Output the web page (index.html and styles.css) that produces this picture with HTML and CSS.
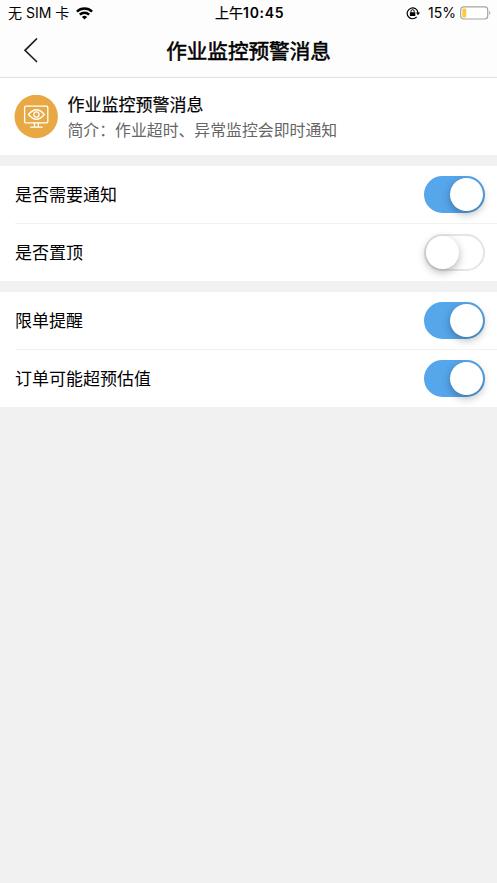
FILE: index.html
```html
<!DOCTYPE html>
<html lang="zh-CN">
<head>
<meta charset="utf-8">
<meta name="viewport" content="width=device-width, initial-scale=1">
<title>作业监控预警消息</title>
<link rel="stylesheet" href="styles.css">
</head>
<body>
<header class="header">
  <div class="status">
    <div class="carrier"><span>无 SIM 卡</span>
      <svg class="wifi" width="17" height="13" viewBox="0 0 17 13"><g fill="none" stroke="#000" stroke-width="2.4"><path d="M.9 4.7a10.8 10.8 0 0 1 15.2 0"/><path d="M3.8 7.7a6.7 6.7 0 0 1 9.4 0"/></g><path d="M5.9 9.9a3.8 3.8 0 0 1 5.2 0L8.500 12.500z"/></svg>
    </div>
    <div class="time">上午<b>10:45</b></div>
    <div class="power">
      <svg class="lock" width="14" height="14" viewBox="0 0 14 14"><path d="M10.700 10.900A5.400 5.400 0 1 1 12 7" fill="none" stroke="#000" stroke-width="1.200"/><path d="M10 6.500h4l-2 2.700z"/><rect x="3.900" y="6.200" width="5.400" height="3.900" rx=".5"/><path d="M5 6.500V5.300a1.600 1.600 0 0 1 3.200 0v1.200" fill="none" stroke="#000"/></svg>
      <span class="percent">15%</span>
      <svg class="battery" width="31" height="14" viewBox="0 0 31 14"><rect x=".7" y=".8" width="27" height="12.200" rx="3" fill="#fff" stroke="#a5a5a5" stroke-width="1.200"/><rect x="2.300" y="2.400" width="3.900" height="9" rx="1" fill="#fbcb3c"/><path d="M29.200 4.800q2.200 2.100 0 4.200z" fill="#a5a5a5"/></svg>
    </div>
  </div>
  <nav class="nav">
    <svg class="back" width="16" height="26" viewBox="0 0 16 26"><path d="M14 .5 2 12.300 14 24" fill="none" stroke="#222" stroke-width="1.700"/></svg>
    <h1 class="title">作业监控预警消息</h1>
  </nav>
</header>
<main>
  <section class="intro">
    <svg class="avatar" width="44" height="44" viewBox="0 0 44 44"><circle cx="22.200" cy="21.500" r="21.700" fill="#e8a843"/><g fill="none" stroke="#fff" stroke-width="1.300" stroke-linecap="round"><rect x="10.600" y="11.100" width="23.200" height="16.700" rx="1.200"/><path d="M14.500 19.500q7.900-9.500 15.800 0-7.900 9.500-15.800 0z"/><circle cx="22.400" cy="19.500" r="2.600"/><path d="M20.500 28v4M24.300 28v4M16.700 32.200H28.200"/></g></svg>
    <div class="intro-text">
      <h2 class="name">作业监控预警消息</h2>
      <p class="summary">简介：作业超时、异常监控会即时通知</p>
    </div>
  </section>
  <section class="group">
    <label class="row"><span>是否需要通知</span><input class="switch" type="checkbox" checked></label>
    <label class="row"><span>是否置顶</span><input class="switch" type="checkbox"></label>
  </section>
  <section class="group">
    <label class="row"><span>限单提醒</span><input class="switch" type="checkbox" checked></label>
    <label class="row"><span>订单可能超预估值</span><input class="switch" type="checkbox" checked></label>
  </section>
</main>
</body>
</html>
```
FILE: styles.css
```css
* { box-sizing: border-box; }
body {
  margin: 0;
  background: #f1f1f1;
  color: #000;
  font-family: Inter, "Noto Sans CJK SC", sans-serif;
}
h1, h2, p { margin: 0; }
svg { display: block; flex: none; }
.header {
  height: 78px;
  background: #fdfdfd;
  border-bottom: 1px solid #e2e2e2;
}
.status {
  height: 26px;
  display: grid;
  grid-template-columns: 1fr auto 1fr;
  align-items: center;
  padding: 0 6px 0 8px;
  font-size: 14px;
  line-height: 26px;
}
.carrier, .power { display: flex; align-items: center; }
.carrier { gap: 7px; }
.power { justify-content: flex-end; }
.percent { margin: 0 4px 0 8px; }
.time { letter-spacing: .1px; -webkit-text-stroke: .25px #000; }
.time b { font-weight: 600; letter-spacing: .65px; -webkit-text-stroke: 0; }
.nav {
  height: 50px;
  display: grid;
  grid-template-columns: 40px 1fr 40px;
  align-items: center;
}
.back { margin-left: 23px; }
.title {
  padding-top: 1px;
  font-size: 20.600px;
  line-height: 30px;
  font-weight: 400;
  text-align: center;
  -webkit-text-stroke: .55px #000;
}
.intro {
  height: 77px;
  display: flex;
  align-items: center;
  gap: 9.500px;
  padding: 0 14px;
  background: #fff;
}
.intro-text { padding-top: 2px; }
.name {
  font-size: 17px;
  line-height: 26px;
  font-weight: 400;
  -webkit-text-stroke: .2px #000;
}
.summary {
  font-size: 15.870px;
  line-height: 26px;
  color: #666;
}
.group {
  margin-top: 11px;
  background: #fff;
}
.row {
  height: 57.500px;
  margin-left: 15px;
  padding-right: 12px;
  display: flex;
  align-items: center;
  justify-content: space-between;
  font-size: 17px;
}
.row span { padding-bottom: 2px; }
.row + .row { box-shadow: 0 -1px #f1f1f1; }
.switch {
  appearance: none;
  display: flex;
  align-items: center;
  width: 61.500px;
  height: 37px;
  margin: 0;
  border: 2px solid #e5e5e5;
  border-radius: 19px;
  background: #fff;
}
.switch::before {
  content: "";
  width: 33px;
  height: 33px;
  border-radius: 50%;
  background: #fff;
  box-shadow: 0 3px 8px rgba(0, 0, 0, .3);
}
.switch:checked {
  justify-content: flex-end;
  background: #56a6ec;
  border-color: #56a6ec;
}
```
